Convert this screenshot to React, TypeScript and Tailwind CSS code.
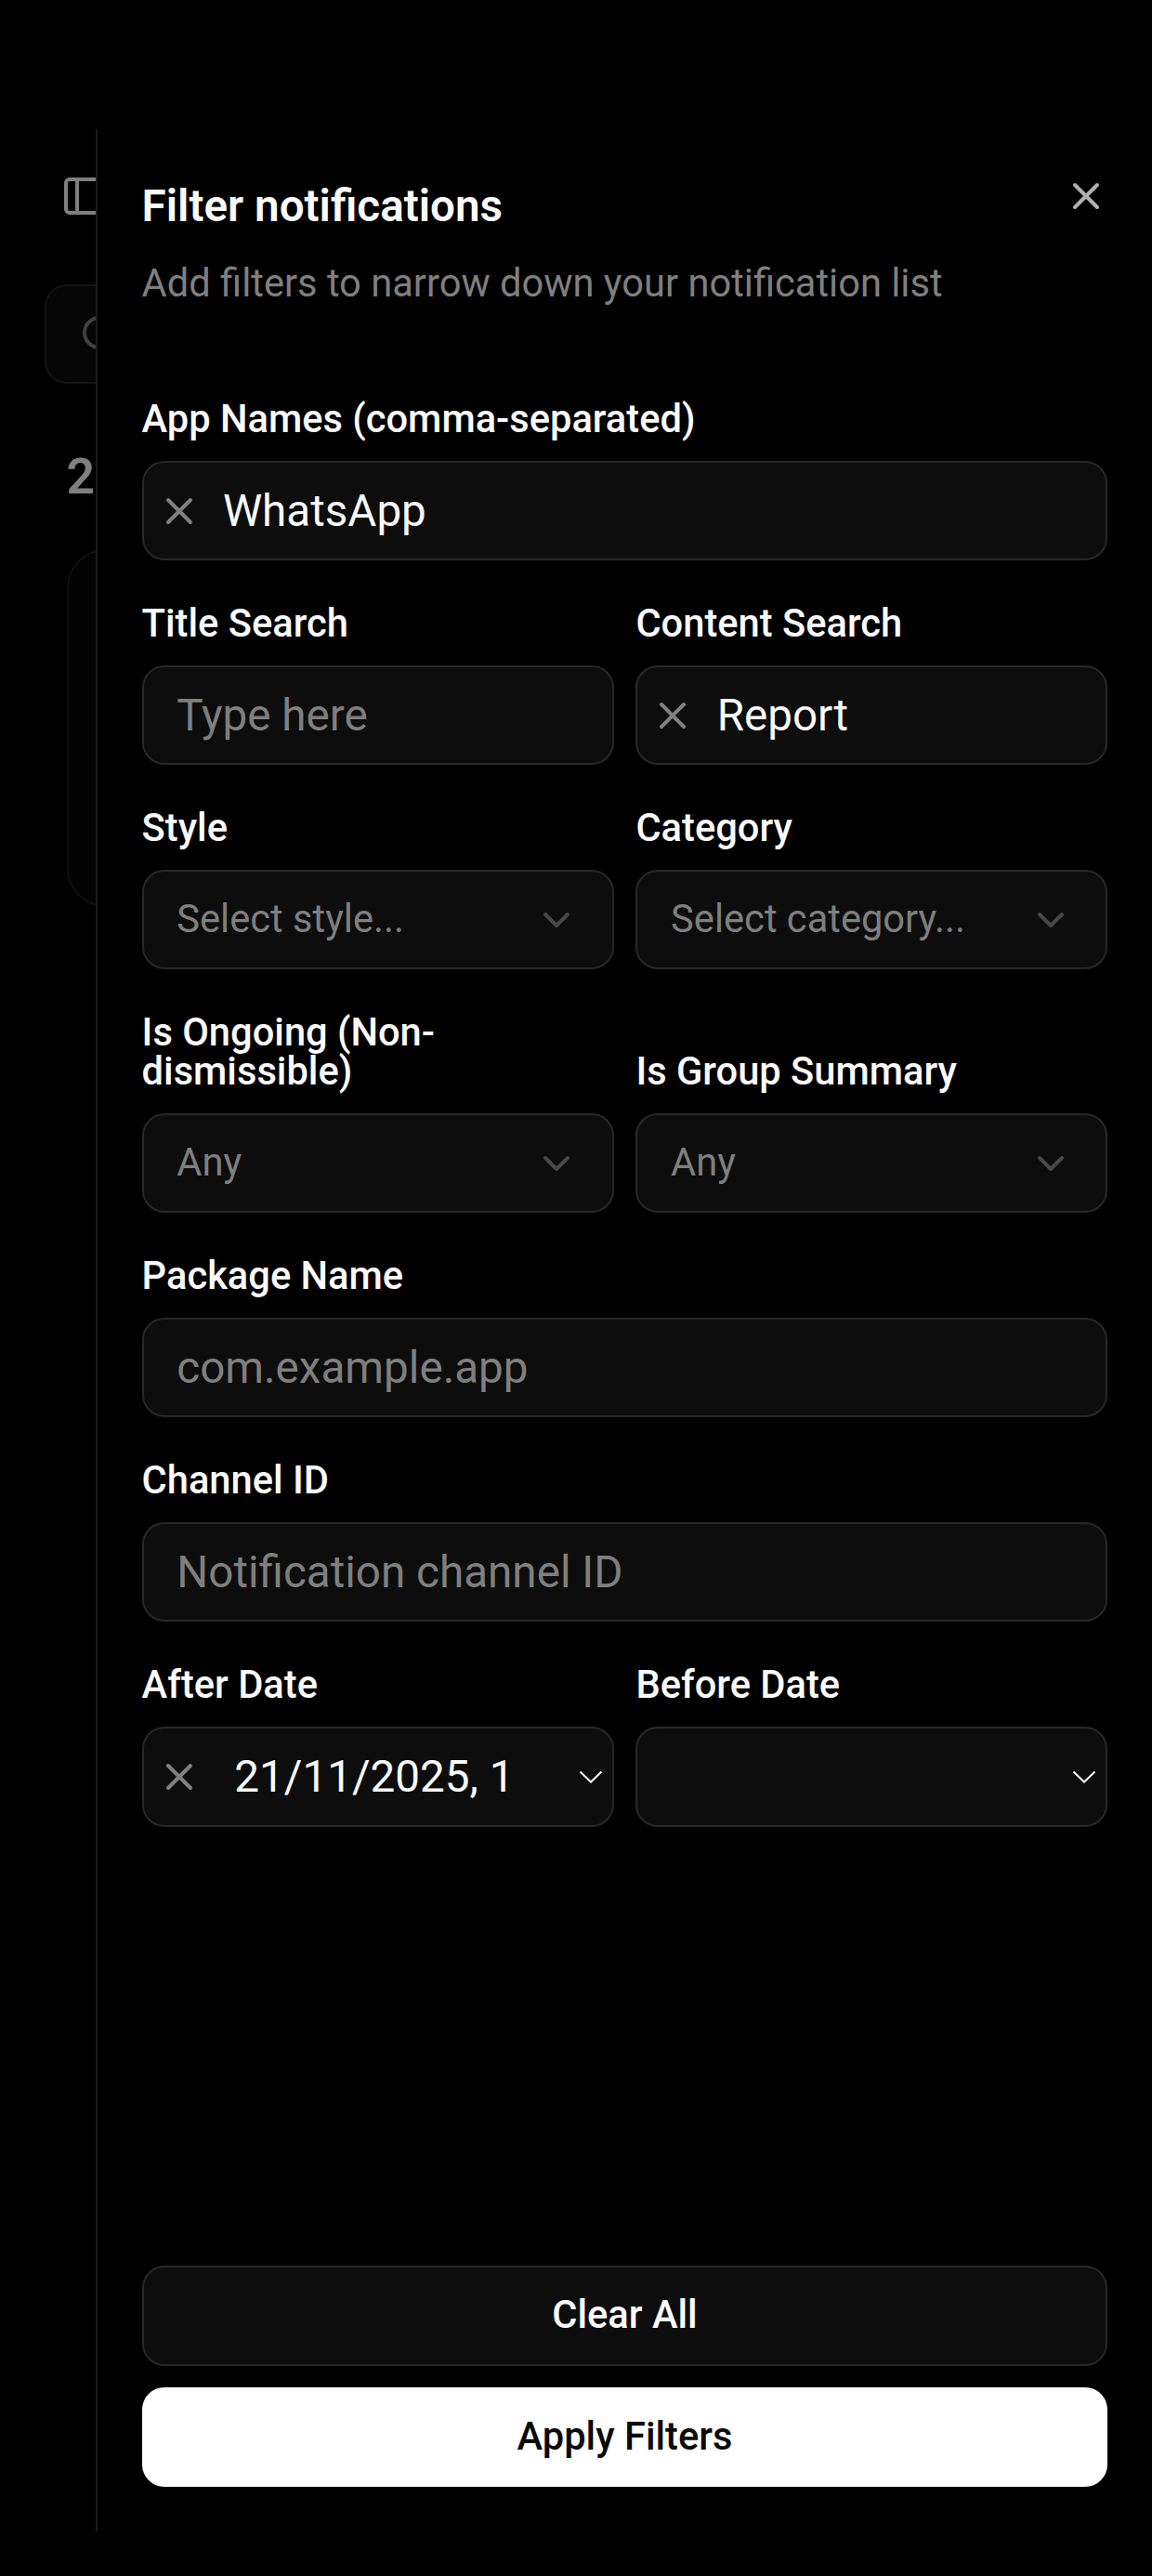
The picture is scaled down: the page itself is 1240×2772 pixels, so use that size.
import { ChevronDown, PanelLeft, Search, X } from "lucide-react"
import type { ReactNode } from "react"

const box =
  "flex h-[107.1px] w-full items-center rounded-[23.8px] border-2 border-[#282828] bg-[#0d0d0d]"

const Field = ({ label, children }: { label: string; children: ReactNode }) => {
  return (
    <div className="flex min-w-0 flex-col gap-[23.8px]">
      <label className="-mt-px mb-px text-[41.65px] leading-none font-medium">{label}</label>
      {children}
    </div>
  )
}

const TextField = ({ label, value, placeholder }: { label: string; value?: string; placeholder?: string }) => {
  return (
    <Field label={label}>
      <div className={box}>
        {value && <X className="ml-[14px] size-12 shrink-0 text-[#808080]" />}
        <input
          className={
            value
              ? "h-full w-full min-w-0 pl-[23.3px] text-[47.6px] outline-none"
              : "h-full w-full min-w-0 pl-[35.7px] text-[47.6px] outline-none placeholder:text-[#7f7f7f]"
          }
          defaultValue={value}
          placeholder={placeholder}
        />
      </div>
    </Field>
  )
}

const SelectField = ({ label, placeholder }: { label: string; placeholder: string }) => {
  return (
    <Field label={label}>
      <button className={`${box} justify-between px-[35.7px] text-[41.65px]`}>
        <span className="-mt-px text-[#7f7f7f]">{placeholder}</span>
        <ChevronDown className="size-12 text-[#484848]" />
      </button>
    </Field>
  )
}

const DateField = ({ label, value }: { label: string; value?: string }) => {
  return (
    <Field label={label}>
      <div className={`${box} pr-[10px]`}>
        {value && <X className="ml-[14px] size-12 shrink-0 text-[#808080]" />}
        <span className="mt-0.5 flex-1 pl-[35.7px] text-[47.6px] whitespace-nowrap">{value}</span>
        <svg className="h-[14px] w-[26px]" viewBox="0 0 26 14" fill="none" stroke="#fafafa" strokeWidth="2">
          <path d="M1.5 1.5 L13 12.5 L24.5 1.5" />
        </svg>
      </div>
    </Field>
  )
}

// Dimmed page that shows beside the open sheet
const Backdrop = () => {
  return (
    <div className="flex h-full w-full flex-col px-12 pt-[187px]">
      <PanelLeft className="ml-[17px] size-12 text-[#7f7f7f]" />
      <div className="mt-[71px] flex h-[107px] items-center rounded-[23.8px] border-2 border-[#141414] bg-[#060606] pl-[35px]">
        <Search className="size-12 text-[#404040]" />
      </div>
      <h2 className="mt-[59.5px] ml-[23.5px] text-[53.6px] leading-[80px] font-semibold text-[#7f7f7f]">2</h2>
      <div className="mt-[38px] ml-[23.5px] h-[385px] rounded-[41.65px] border-2 border-[#101010] bg-[#030303]" />
    </div>
  )
}

const FilterSheet = () => {
  return (
    <aside className="absolute top-[139px] right-0 flex h-[2585px] w-[1137px] flex-col border-l-2 border-[#1b1b1b] bg-black">
      <header className="flex flex-col gap-[17.85px] p-[47.6px]">
        <h1 className="text-[47.6px] leading-[71.4px] font-semibold">Filter notifications</h1>
        <p className="-mt-px mb-px text-[41.65px] leading-[59.5px] text-[#7f7f7f]">
          Add filters to narrow down your notification list
        </p>
      </header>
      <X className="absolute top-12 right-[47px] size-12 text-[#b0b0b0]" />

      <div className="flex flex-1 flex-col gap-[47.6px] p-[47.6px]">
        <TextField label="App Names (comma-separated)" value="WhatsApp" />
        <div className="grid grid-cols-2 items-end gap-x-[23.8px] gap-y-[47.6px]">
          <TextField label="Title Search" placeholder="Type here" />
          <TextField label="Content Search" value="Report" />
          <SelectField label="Style" placeholder="Select style..." />
          <SelectField label="Category" placeholder="Select category..." />
          <SelectField label="Is Ongoing (Non-dismissible)" placeholder="Any" />
          <SelectField label="Is Group Summary" placeholder="Any" />
        </div>
        <TextField label="Package Name" placeholder="com.example.app" />
        <TextField label="Channel ID" placeholder="Notification channel ID" />
        <div className="grid grid-cols-2 gap-[23.8px]">
          <DateField label="After Date" value="21/11/2025, 1" />
          <DateField label="Before Date" />
        </div>
      </div>

      <footer className="flex flex-col gap-[23.8px] p-[47.6px] text-[41.65px] leading-[59.5px] font-medium">
        <button className={`${box} justify-center pb-0.5`}>Clear All</button>
        <button className="h-[107.1px] rounded-[23.8px] bg-white pb-0.5 text-[#0a0a0a]">Apply Filters</button>
      </footer>
    </aside>
  )
}

const App = () => {
  return (
    <main className="relative h-[2772px] w-[1240px] overflow-hidden bg-black font-[Roboto,sans-serif] text-[#fafafa]">
      <Backdrop />
      <FilterSheet />
    </main>
  )
}

export default App
